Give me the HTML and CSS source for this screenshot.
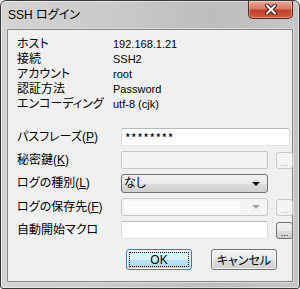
FILE: index.html
```html
<!DOCTYPE html>
<html lang="ja">
<head>
  <meta charset="UTF-8">
  <title>SSH ログイン</title>
  <link rel="stylesheet" href="styles.css">
</head>
<body>
  <div class="window">
    <div class="titlebar">
      <span class="title">SSH ログイン</span>
      <button class="close" type="button">
        <svg viewBox="0 0 12 11" width="12" height="11">
          <path d="M2 1.5l8 8M10 1.5l-8 8" stroke="#4a1a10" stroke-width="4" stroke-linecap="round"/>
          <path d="M2 1.5l8 8M10 1.5l-8 8" stroke="#fff" stroke-width="2" stroke-linecap="round"/>
        </svg>
      </button>
    </div>

    <div class="client">
      <dl class="info">
        <dt>ホスト</dt><dd>192.168.1.21</dd>
        <dt>接続</dt><dd>SSH2</dd>
        <dt>アカウント</dt><dd>root</dd>
        <dt>認証方法</dt><dd>Password</dd>
        <dt>エンコーディング</dt><dd>utf-8 (cjk)</dd>
      </dl>

      <div class="form">
        <label for="pass">パスフレーズ(<u>P</u>)</label>
        <input id="pass" class="field wide" type="text" value="********">

        <label for="key">秘密鍵(<u>K</u>)</label>
        <input id="key" class="field" type="text" disabled>
        <button class="browse" type="button" disabled>...</button>

        <label>ログの種別(<u>L</u>)</label>
        <div class="combo">
          <span class="combo-text">なし</span>
          <span class="arrow"></span>
        </div>

        <label>ログの保存先(<u>F</u>)</label>
        <div class="combo disabled">
          <span class="combo-text"></span>
          <span class="arrow"></span>
        </div>
        <button class="browse" type="button" disabled>...</button>

        <label for="macro">自動開始マクロ</label>
        <input id="macro" class="field" type="text">
        <button class="browse" type="button">...</button>
      </div>

      <div class="actions">
        <button class="btn default" type="button"><span>OK</span></button>
        <button class="btn" type="button">キャンセル</button>
      </div>
    </div>
  </div>
</body>
</html>
```

FILE: styles.css
```css
:root {
  --frame-border: #3a3a3a;
  --client-bg: #f0f0f0;
  --client-border: #83878f;
  --text-color: #000000;
  --btn-border: #707070;
  --disabled-border: #c4c6c8;
  --disabled-bg: #f4f4f4;
}

* {
  margin: 0;
  padding: 0;
  box-sizing: border-box;
}

body {
  width: 300px;
  height: 289px;
  background: #ffffff;
  font-family: "Liberation Sans", "Noto Sans CJK JP", sans-serif;
  font-size: 12px;
  font-feature-settings: "palt";
  color: var(--text-color);
  overflow: hidden;
}

.window {
  width: 300px;
  height: 289px;
  border: 1px solid var(--frame-border);
  border-radius: 6px 6px 3px 3px;
  background: linear-gradient(to right, #d4d4d4, #c9c9c9 40%, #bdbdbd 70%, #c6c6c6);
  box-shadow: inset 0 0 0 1px rgba(255, 255, 255, 0.45);
  padding: 0 6px 6px;
  display: flex;
  flex-direction: column;
}

/* タイトルバー */
.titlebar {
  height: 28px;
  display: flex;
  justify-content: space-between;
  align-items: flex-start;
}

.title {
  padding: 6px 0 0 1px;
  line-height: 16px;
  font-size: 12px;
}

.close {
  width: 45px;
  height: 18px;
  border: 1px solid #5c2418;
  border-top: none;
  border-radius: 0 0 5px 5px;
  background: linear-gradient(#eaa898, #d77a63 45%, #c2402a 55%, #d45a3d);
  box-shadow: inset 0 0 0 1px rgba(255, 255, 255, 0.35);
  display: flex;
  align-items: center;
  justify-content: center;
}

/* クライアント領域 */
.client {
  flex: 1;
  background: var(--client-bg);
  border: 1px solid var(--client-border);
  box-shadow: 0 0 0 1px #dcdcdc;
  padding: 7px 7px 0 9px;
}

.info {
  display: grid;
  grid-template-columns: 96px 1fr;
  line-height: 15px;
}

.info dd {
  margin: 0;
  font-size: 11px;
}

.form {
  margin-top: 16px;
  display: grid;
  grid-template-columns: 96px 147px 17px;
  grid-template-rows: 18px 18px 19px 18px 18px;
  column-gap: 8px;
  row-gap: 5px;
}

.form label {
  grid-column: 1;
  align-self: center;
  line-height: 15px;
  white-space: nowrap;
}

.field {
  grid-column: 2;
  height: 18px;
  border: 1px solid;
  border-color: #b5b9c0 #d6dbe2 #dfe4ea #d6dbe2;
  border-radius: 2px;
  background: #ffffff;
  font: inherit;
  padding: 0 3px;
  outline: none;
}

.field.wide {
  grid-column: 2 / 4;
  width: 169px;
  font-family: "Noto Sans CJK JP", sans-serif;
  letter-spacing: 0.5px;
}

.field:disabled {
  background: var(--disabled-bg);
  border-color: var(--disabled-border);
}

.combo {
  grid-column: 2;
  height: 19px;
  border: 1px solid var(--btn-border);
  border-radius: 3px;
  background: linear-gradient(#f2f2f2, #ebebeb 50%, #dddddd 50%, #cfcfcf);
  display: flex;
  align-items: center;
  padding: 0 7px 0 2px;
}

.combo-text {
  flex: 1;
  line-height: 15px;
}

.arrow {
  width: 0;
  height: 0;
  border-left: 4px solid transparent;
  border-right: 4px solid transparent;
  border-top: 4px solid #000000;
}

.combo.disabled {
  height: 18px;
  background: var(--disabled-bg);
  border-color: var(--disabled-border);
  padding: 2px 7px 2px 2px;
}

.combo.disabled .combo-text {
  height: 12px;
  background: #fbfbfb;
  margin-right: 12px;
}

.combo.disabled .arrow {
  border-top-color: #a3a3a3;
}

.browse {
  grid-column: 3;
  height: 17px;
  align-self: center;
  border: 1px solid var(--btn-border);
  border-radius: 3px;
  background: linear-gradient(#f2f2f2, #ebebeb 50%, #dddddd 50%, #cfcfcf);
  font-size: 9px;
  line-height: 20px;
  color: #000000;
}

.browse:disabled {
  border-color: var(--disabled-border);
  background: var(--disabled-bg);
  color: #a0a0a0;
}

/* ボタン */
.actions {
  margin-top: 10px;
  display: flex;
  justify-content: flex-end;
  gap: 19px;
  padding-right: 8px;
}

.btn {
  width: 66px;
  height: 21px;
  border: 1px solid var(--btn-border);
  border-radius: 3px;
  background: linear-gradient(#f2f2f2, #ebebeb 50%, #dddddd 50%, #cfcfcf);
  box-shadow: inset 0 0 0 1px rgba(255, 255, 255, 0.7);
  font: inherit;
  color: var(--text-color);
}

.btn.default {
  border-color: #3c7fb1;
  background: linear-gradient(#eaf6fd, #d9f0fc 50%, #bee6fd 50%, #a7d9f5);
  padding: 2px;
}

.btn.default span {
  display: flex;
  height: 100%;
  align-items: center;
  justify-content: center;
  border: 1px dotted #000000;
}
```
